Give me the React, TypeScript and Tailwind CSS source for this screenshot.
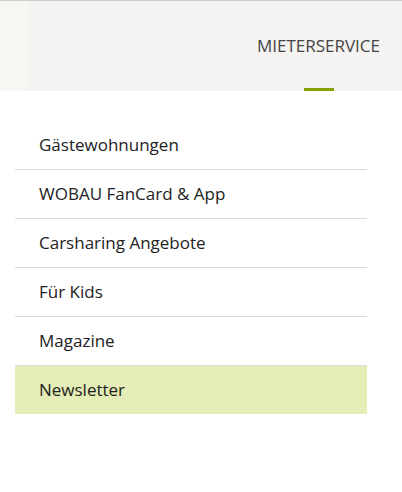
import React from "react";

const items = [
  "Gästewohnungen",
  "WOBAU FanCard & App",
  "Carsharing Angebote",
  "Für Kids",
  "Magazine",
  "Newsletter",
];

export default function App() {
  return (
    <div className="w-[402px] h-[492px] bg-white" style={{ fontFamily: "'Open Sans', 'Liberation Sans', sans-serif" }}>
      <div className="h-[91px] border-t border-[#cfcfcf] bg-[#f4f3f1] flex">
        <div className="w-[27px] bg-[#f8f6f3]" />
        <div className="flex-1 flex justify-end">
          <div className="relative mr-[22px] flex items-start pt-[32px]">
            <span className="text-[17px] text-[#444]">MIETERSERVICE</span>
            <div className="absolute bottom-0 left-[47px] w-[30px] h-[3px] bg-[#85a000]" />
          </div>
        </div>
      </div>
      <ul className="mt-[30px] mx-[15px] w-[352px]">
        {items.map((t, i) => {
          const last = i === items.length - 1;
          return (
            <li
              key={t}
              className={
                last
                  ? "h-[48px] flex items-center pl-[24px] bg-[#e4edb5] text-[17px] text-[#222]"
                  : "h-[49px] flex items-center pl-[24px] border-b border-[#d9dcdc] text-[17px] text-[#222]"
              }
            >
              {t}
            </li>
          );
        })}
      </ul>
    </div>
  );
}
